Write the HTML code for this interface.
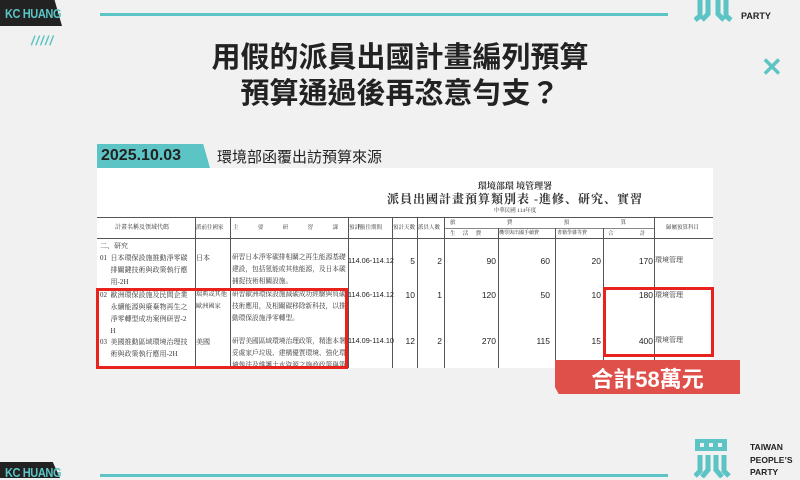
<!DOCTYPE html>
<html><head><meta charset="utf-8"><style>
*{margin:0;padding:0;box-sizing:border-box}
body{width:800px;height:478px;background:#f1f1f1;position:relative;overflow:hidden;font-family:"Liberation Sans","Noto Sans CJK TC",sans-serif}
.a{position:absolute}
.t{font-family:"Liberation Serif","Noto Serif CJK SC",serif;color:#333;font-size:7px;line-height:12px;white-space:nowrap}
.vl{position:absolute;width:1px;background:#555}
.hl{position:absolute;height:1px;background:#555}
.n{font-family:"Liberation Sans",sans-serif;font-size:8.5px;color:#222;text-align:right;white-space:nowrap}
.kc{color:#5cc4c4;font-weight:bold;font-size:13px;letter-spacing:-0.5px;transform:scaleX(0.85);transform-origin:left}
</style></head><body>
<!-- top bar -->
<div class="a" style="left:0;top:0;width:62px;height:26px;background:#222;clip-path:polygon(0 0,88% 0,100% 100%,0 100%)"></div>
<div class="a kc" style="left:5px;top:6px">KC HUANG</div>
<div class="a" style="left:100px;top:13px;width:568px;height:3px;background:#5cc4c4"></div>
<div class="a" style="left:31px;top:33px;color:#5cc4c4;font-weight:bold;font-size:13px;letter-spacing:1px;font-style:italic">/////</div>
<svg class="a" style="left:694px;top:0" width="46" height="22"><path d="M6 0v16l-5 4M14 0v14l-6 6M24 0v14l6 6M32 0v16l5 4" stroke="#5cc4c4" stroke-width="5" fill="none"/></svg>
<div class="a" style="left:741px;top:11px;font-weight:bold;font-size:9px;color:#222">PARTY</div>
<div class="a" style="left:761px;top:52px;color:#5cc4c4;font-weight:bold;font-size:26px">✕</div>
<!-- title -->
<div class="a" style="left:0;top:40px;width:800px;text-align:center;font-weight:bold;font-size:29px;line-height:36px;color:#222">用假的派員出國計畫編列預算<br>預算通過後再恣意勻支？</div>
<!-- date tag -->
<div class="a" style="left:97px;top:144px;width:113px;height:24px;background:#5cc4c4;clip-path:polygon(0 0,94% 0,100% 100%,0 100%)"></div>
<div class="a" style="left:101px;top:147px;font-weight:bold;font-size:16px;color:#222">2025.10.03</div>
<div class="a" style="left:217px;top:146px;font-size:15px;color:#222">環境部函覆出訪預算來源</div>
<!-- table -->
<div class="a" style="left:97px;top:168px;width:616px;height:200px;background:#fff"></div>
<div class="a t" style="left:0;width:1030px;top:180px;text-align:center;font-weight:bold;font-size:9px">環境部環 境管理署</div>
<div class="a t" style="left:0;width:1030px;top:193px;text-align:center;font-weight:bold;font-size:12px;letter-spacing:1px">派員出國計畫預算類別表 -進修、研究、實習</div>
<div class="a t" style="left:0;width:1030px;top:205px;text-align:center;font-size:5.5px">中華民國 114年度</div>
<div class="hl" style="left:97px;top:217px;width:616px"></div>
<div class="hl" style="left:97px;top:238px;width:616px"></div>
<div class="hl" style="left:444px;top:228px;width:210px;background:#888"></div>
<div class="vl" style="left:195px;top:217px;height:151px"></div>
<div class="vl" style="left:230px;top:217px;height:151px"></div>
<div class="vl" style="left:348px;top:217px;height:151px"></div>
<div class="vl" style="left:392px;top:217px;height:151px"></div>
<div class="vl" style="left:417px;top:217px;height:151px"></div>
<div class="vl" style="left:444px;top:217px;height:151px"></div>
<div class="vl" style="left:498px;top:228px;height:140px"></div>
<div class="vl" style="left:555px;top:228px;height:140px"></div>
<div class="vl" style="left:603px;top:228px;height:140px"></div>
<div class="vl" style="left:654px;top:217px;height:151px"></div>
<div class="a t" style="left:115px;top:222px;font-size:6px">計畫名稱及領域代碼</div>
<div class="a t" style="left:196px;top:222px;font-size:5.5px">派前往國家</div>
<div class="a t" style="left:233px;top:222px;font-size:5.5px;word-spacing:18px">主 要 研 習 課 程</div>
<div class="a t" style="left:349px;top:222px;font-size:5.5px">預計前往期間</div>
<div class="a t" style="left:393px;top:222px;font-size:5.5px">預計天數</div>
<div class="a t" style="left:418px;top:222px;font-size:5.5px">派員人數</div>
<div class="a t" style="left:450px;top:217px;font-size:5.5px;word-spacing:50px">旅 費 預 算</div>
<div class="a t" style="left:450px;top:228px;font-size:5.5px;word-spacing:6px">生 活 費</div>
<div class="a t" style="left:499px;top:228px;font-size:5px">機票與出國手續費</div>
<div class="a t" style="left:557px;top:228px;font-size:5px">書籍學雜等費</div>
<div class="a t" style="left:608px;top:228px;font-size:5.5px;word-spacing:25px">合 計</div>
<div class="a t" style="left:666px;top:222px;font-size:5.5px">歸屬預算科目</div>
<div class="a t" style="left:100px;top:240px">二、研究</div>
<div class="a t" style="left:100px;top:252px">01&nbsp;&nbsp;日本環保設施推動淨零碳<br>&nbsp;&nbsp;&nbsp;&nbsp;&nbsp;&nbsp;排關鍵技術與政策執行應<br>&nbsp;&nbsp;&nbsp;&nbsp;&nbsp;&nbsp;用-2H</div>
<div class="a t" style="left:100px;top:289px">02&nbsp;&nbsp;歐洲環保設施及民間企業<br>&nbsp;&nbsp;&nbsp;&nbsp;&nbsp;&nbsp;永續能源與廢棄物再生之<br>&nbsp;&nbsp;&nbsp;&nbsp;&nbsp;&nbsp;淨零轉型成功案例研習-2<br>&nbsp;&nbsp;&nbsp;&nbsp;&nbsp;&nbsp;H</div>
<div class="a t" style="left:100px;top:336px">03&nbsp;&nbsp;美國推動區域環境治理技<br>&nbsp;&nbsp;&nbsp;&nbsp;&nbsp;&nbsp;術與政策執行應用-2H</div>
<div class="a t" style="left:196px;top:252px">日本</div>
<div class="a t" style="left:196px;top:289px;font-size:6.2px">瑞典或其他<br>歐洲國家</div>
<div class="a t" style="left:196px;top:336px">美國</div>
<div class="a t" style="left:232px;top:252px;font-size:6.7px">研習日本淨零碳排相關之再生能源基礎<br>建設，包括氫能或其他能源，及日本碳<br>捕捉技術相關設施。</div>
<div class="a t" style="left:232px;top:289px;font-size:6.7px">研習歐洲環保設施減碳成功經驗與負碳<br>技術應用，及相關碳移除新科技，以推<br>動環保設施淨零轉型。</div>
<div class="a t" style="left:232px;top:336px;font-size:6.7px">研習美國區域環境治理政策，精進本署<br>妥處家戶垃圾、建構優質環境、強化環<br>境執法及維護土水資源之施政政策與策</div>
<div class="a n" style="left:348px;top:256px;width:43px;font-size:7.3px">114.06-114.12</div>
<div class="a n" style="left:348px;top:290px;width:43px;font-size:7.3px">114.06-114.12</div>
<div class="a n" style="left:348px;top:336px;width:43px;font-size:7.3px">114.09-114.10</div>
<div class="a n" style="left:392px;top:256px;width:23px">5</div><div class="a n" style="left:417px;top:256px;width:25px">2</div>
<div class="a n" style="left:392px;top:290px;width:23px">10</div><div class="a n" style="left:417px;top:290px;width:25px">1</div>
<div class="a n" style="left:392px;top:336px;width:23px">12</div><div class="a n" style="left:417px;top:336px;width:25px">2</div>
<div class="a n" style="left:444px;top:256px;width:52px">90</div><div class="a n" style="left:498px;top:256px;width:52px">60</div><div class="a n" style="left:555px;top:256px;width:46px">20</div><div class="a n" style="left:603px;top:256px;width:50px">170</div>
<div class="a n" style="left:444px;top:290px;width:52px">120</div><div class="a n" style="left:498px;top:290px;width:52px">50</div><div class="a n" style="left:555px;top:290px;width:46px">10</div><div class="a n" style="left:603px;top:290px;width:50px">180</div>
<div class="a n" style="left:444px;top:336px;width:52px">270</div><div class="a n" style="left:498px;top:336px;width:52px">115</div><div class="a n" style="left:555px;top:336px;width:46px">15</div><div class="a n" style="left:603px;top:336px;width:50px">400</div>
<div class="a t" style="left:655px;top:254px">環境管理</div>
<div class="a t" style="left:655px;top:289px">環境管理</div>
<div class="a t" style="left:655px;top:334px">環境管理</div>
<!-- red boxes -->
<div class="a" style="left:96px;top:288px;width:252px;height:81px;border:3px solid #e8231e"></div>
<div class="a" style="left:603px;top:287px;width:111px;height:70px;border:3px solid #e8231e"></div>
<div class="a" style="left:555px;top:360px;width:185px;height:34px;background:#e0504a;clip-path:polygon(0 0,100% 0,100% 100%,2% 100%,0 80%)"></div>
<div class="a" style="left:555px;top:362px;width:185px;text-align:center;color:#fff;font-weight:bold;font-size:22px">合計58萬元</div>
<!-- bottom -->
<div class="a" style="left:0;top:462px;width:60px;height:16px;background:#222;clip-path:polygon(0 0,88% 0,100% 100%,0 100%)"></div>
<div class="a kc" style="left:5px;top:465px">KC HUANG</div>
<div class="a" style="left:100px;top:474px;width:568px;height:3px;background:#5cc4c4"></div>
<svg class="a" style="left:694px;top:437px" width="46" height="41"><rect x="1" y="2" width="32" height="12" fill="#5cc4c4"/><rect x="6" y="6" width="4" height="4" fill="#f1f1f1"/><rect x="15" y="6" width="4" height="4" fill="#f1f1f1"/><rect x="24" y="6" width="4" height="4" fill="#f1f1f1"/><path d="M6 18v16l-5 5M14 18v15l-6 7M22 18v15l6 7M30 18v16l5 5" stroke="#5cc4c4" stroke-width="5" fill="none"/></svg>
<div class="a" style="left:750px;top:441px;font-weight:bold;font-size:8.5px;line-height:12.5px;color:#222">TAIWAN<br>PEOPLE’S<br>PARTY</div>
</body></html>
